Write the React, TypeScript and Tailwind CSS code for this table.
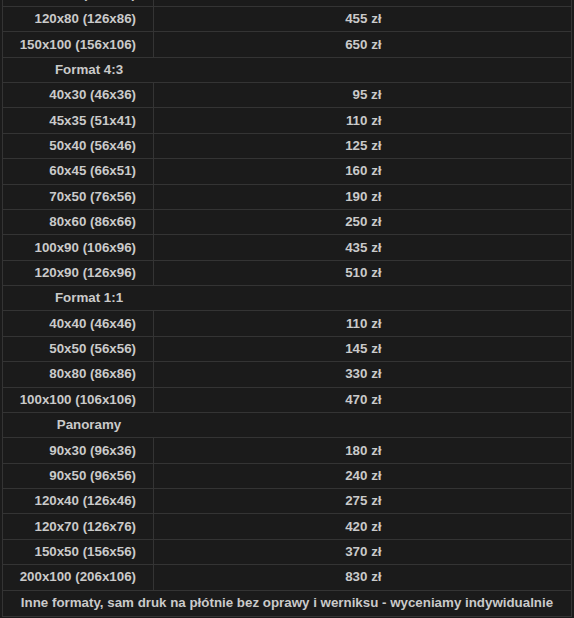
import React from 'react';

type Row = { size: string; price: string } | { group: string };

const rows: Row[] = [
  { size: '100x70 (106x76)', price: '390 zł' },
  { size: '120x80 (126x86)', price: '455 zł' },
  { size: '150x100 (156x106)', price: '650 zł' },
  { group: 'Format 4:3' },
  { size: '40x30 (46x36)', price: '95 zł' },
  { size: '45x35 (51x41)', price: '110 zł' },
  { size: '50x40 (56x46)', price: '125 zł' },
  { size: '60x45 (66x51)', price: '160 zł' },
  { size: '70x50 (76x56)', price: '190 zł' },
  { size: '80x60 (86x66)', price: '250 zł' },
  { size: '100x90 (106x96)', price: '435 zł' },
  { size: '120x90 (126x96)', price: '510 zł' },
  { group: 'Format 1:1' },
  { size: '40x40 (46x46)', price: '110 zł' },
  { size: '50x50 (56x56)', price: '145 zł' },
  { size: '80x80 (86x86)', price: '330 zł' },
  { size: '100x100 (106x106)', price: '470 zł' },
  { group: 'Panoramy' },
  { size: '90x30 (96x36)', price: '180 zł' },
  { size: '90x50 (96x56)', price: '240 zł' },
  { size: '120x40 (126x46)', price: '275 zł' },
  { size: '120x70 (126x76)', price: '420 zł' },
  { size: '150x50 (156x56)', price: '370 zł' },
  { size: '200x100 (206x106)', price: '830 zł' },
];

export default function App() {
  return (
    <div
      className="h-[618px] overflow-hidden bg-[#1b1b1b] px-[2px] text-[13.33px] font-bold text-[#cacaca]"
      style={{ fontFamily: '"Liberation Sans", Arial, sans-serif' }}
    >
      <div className="-mt-[18.4px] w-[570px] border-x border-b border-[#343434]">
        {rows.map((r, i) =>
          'group' in r ? (
            <div key={i} className="flex h-[25.375px] items-center border-b border-[#343434]">
              <div className="w-[172px] text-center">{r.group}</div>
            </div>
          ) : (
            <div key={i} className="flex h-[25.375px] border-b border-[#343434]">
              <div className="flex w-[151px] items-center justify-end border-r border-[#343434] pr-[17px]">
                {r.size}
              </div>
              <div className="flex flex-1 items-center justify-center">
                <span className="w-[38px] text-right whitespace-nowrap">{r.price}</span>
              </div>
            </div>
          )
        )}
        <div className="flex h-[25.375px] items-center justify-center whitespace-nowrap">
          Inne formaty, sam druk na płótnie bez oprawy i werniksu - wyceniamy indywidualnie
        </div>
      </div>
    </div>
  );
}
